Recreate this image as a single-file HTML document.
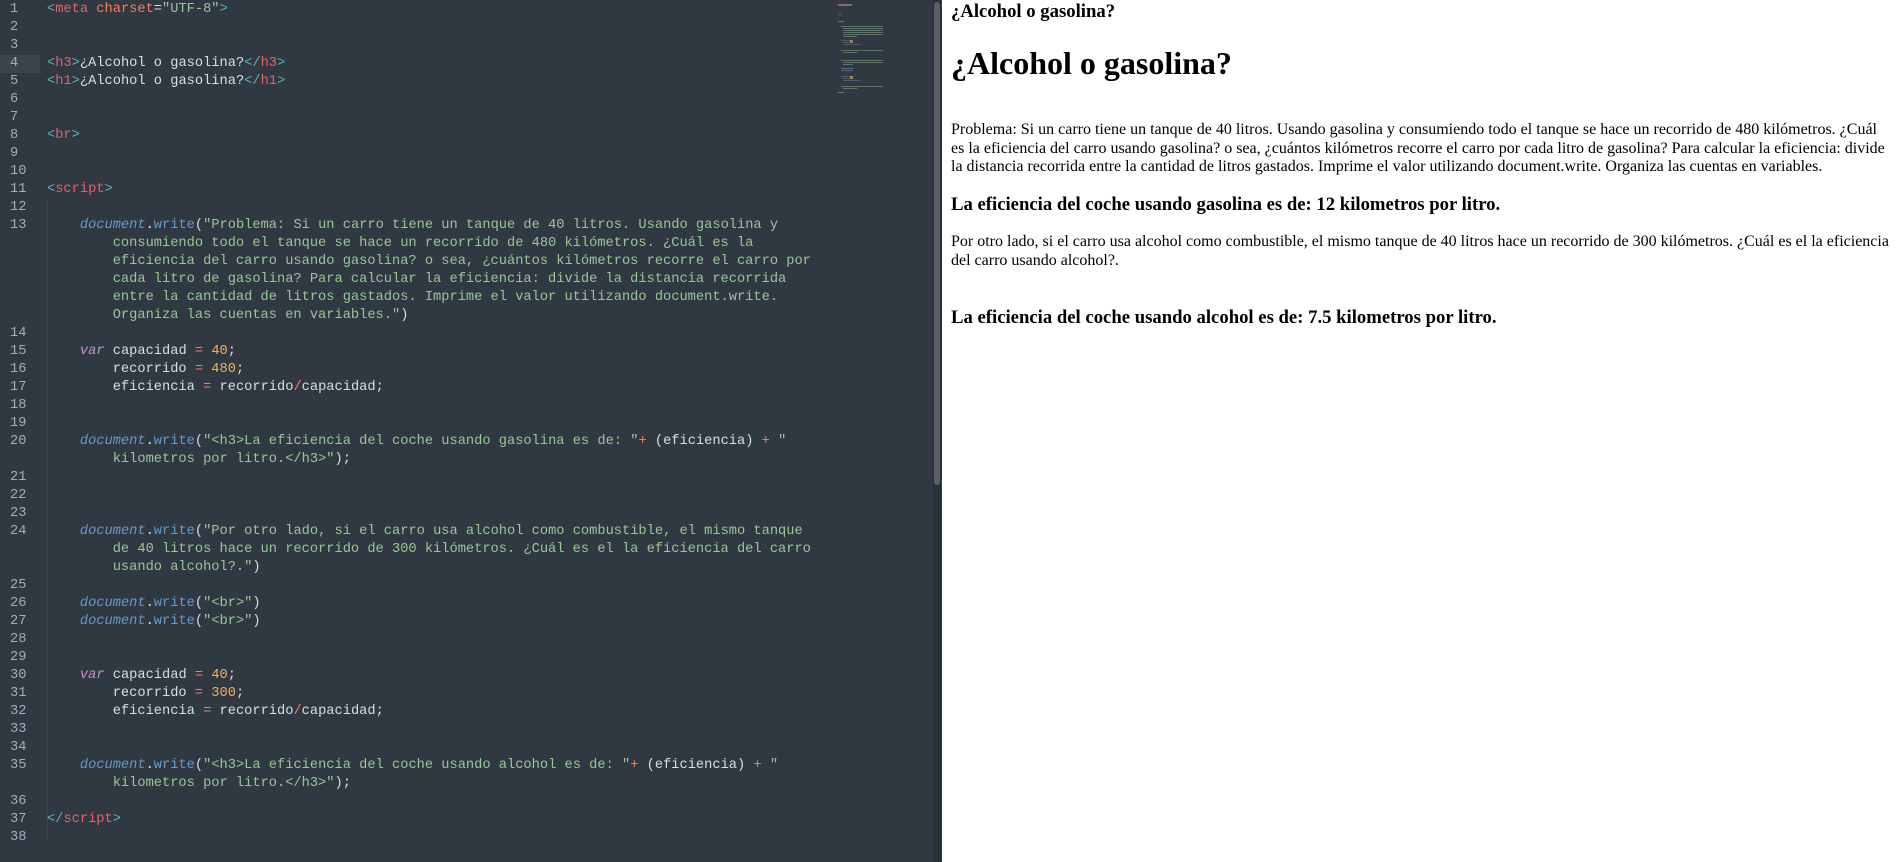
<!DOCTYPE html>
<html><head><meta charset="UTF-8"><style>
html,body{margin:0;padding:0;width:1898px;height:862px;overflow:hidden;background:#303841}
#ed{position:absolute;left:0;top:0;width:933px;height:862px;background:#303841;font-family:"Liberation Mono",monospace;font-size:13.7px;color:#d8dee9}
#rows{position:absolute;left:0;top:2px;width:933px;height:860px}
.r{position:absolute;left:0;height:18px;line-height:18px;white-space:pre;width:933px}
.n{position:absolute;left:0;width:40px;text-align:left;padding-left:10px;box-sizing:border-box;color:#a6acb9}
.c{position:absolute;left:47px}
.hl{background:#3b434c}
.t{color:#5fb3b3}.tn{color:#ec5f66}.s{color:#99c794}.k{color:#c594c5;font-style:italic}.d{color:#6699cc;font-style:italic}.f{color:#6699cc}.o{color:#f97b58}.nu{color:#f9ae58}
#sb{position:absolute;left:933px;top:0;width:8px;height:862px;background:#2a3038}
#th{position:absolute;left:934px;top:2px;width:6px;height:483px;background:#5b6067;border-radius:3px}
#mm{position:absolute;left:838px;top:4px;width:90px;height:90px}
#pv{position:absolute;left:942px;top:0;width:956px;height:862px;background:#fff;font-family:"Liberation Serif",serif;color:#000}
#pv div{position:absolute;left:9px;width:940px}
.h3{font-weight:bold;font-size:18.7px;line-height:22px}
.h1{font-weight:bold;font-size:32px;line-height:37px}
.p{font-size:16px;line-height:18.5px}
.guide{position:absolute;left:47px;width:0;border-left:1px dotted #4a525c}
</style></head><body>
<div id="ed">
<div id="rows">
<div class="guide" style="top:199px;height:640px"></div>
<div class="r" style="top:-1px"><span class="n">1</span><span class="c"><span class="t">&lt;</span><span class="tn">meta</span> <span class="o">charset</span>=<span class="s">"UTF-8"</span><span class="t">&gt;</span></span></div>
<div class="r" style="top:17px"><span class="n">2</span></div>
<div class="r" style="top:35px"><span class="n">3</span></div>
<div class="r" style="top:53px"><span class="n hl">4</span><span class="c"><span class="t">&lt;</span><span class="tn">h3</span><span class="t">&gt;</span>¿Alcohol o gasolina?<span class="t">&lt;/</span><span class="tn">h3</span><span class="t">&gt;</span></span></div>
<div class="r" style="top:71px"><span class="n">5</span><span class="c"><span class="t">&lt;</span><span class="tn">h1</span><span class="t">&gt;</span>¿Alcohol o gasolina?<span class="t">&lt;/</span><span class="tn">h1</span><span class="t">&gt;</span></span></div>
<div class="r" style="top:89px"><span class="n">6</span></div>
<div class="r" style="top:107px"><span class="n">7</span></div>
<div class="r" style="top:125px"><span class="n">8</span><span class="c"><span class="t">&lt;</span><span class="tn">br</span><span class="t">&gt;</span></span></div>
<div class="r" style="top:143px"><span class="n">9</span></div>
<div class="r" style="top:161px"><span class="n">10</span></div>
<div class="r" style="top:179px"><span class="n">11</span><span class="c"><span class="t">&lt;</span><span class="tn">script</span><span class="t">&gt;</span></span></div>
<div class="r" style="top:197px"><span class="n">12</span></div>
<div class="r" style="top:215px"><span class="n">13</span><span class="c">    <span class="d">document</span>.<span class="f">write</span>(<span class="s">"Problema: Si un carro tiene un tanque de 40 litros. Usando gasolina y</span></span></div>
<div class="r" style="top:233px"><span class="c s">        consumiendo todo el tanque se hace un recorrido de 480 kilómetros. ¿Cuál es la</span></div>
<div class="r" style="top:251px"><span class="c s">        eficiencia del carro usando gasolina? o sea, ¿cuántos kilómetros recorre el carro por</span></div>
<div class="r" style="top:269px"><span class="c s">        cada litro de gasolina? Para calcular la eficiencia: divide la distancia recorrida</span></div>
<div class="r" style="top:287px"><span class="c s">        entre la cantidad de litros gastados. Imprime el valor utilizando document.write.</span></div>
<div class="r" style="top:305px"><span class="c"><span class="s">        Organiza las cuentas en variables."</span>)</span></div>
<div class="r" style="top:323px"><span class="n">14</span></div>
<div class="r" style="top:341px"><span class="n">15</span><span class="c">    <span class="k">var</span> capacidad <span class="o">=</span> <span class="nu">40</span>;</span></div>
<div class="r" style="top:359px"><span class="n">16</span><span class="c">        recorrido <span class="o">=</span> <span class="nu">480</span>;</span></div>
<div class="r" style="top:377px"><span class="n">17</span><span class="c">        eficiencia <span class="o">=</span> recorrido<span class="o">/</span>capacidad;</span></div>
<div class="r" style="top:395px"><span class="n">18</span></div>
<div class="r" style="top:413px"><span class="n">19</span></div>
<div class="r" style="top:431px"><span class="n">20</span><span class="c">    <span class="d">document</span>.<span class="f">write</span>(<span class="s">"&lt;h3&gt;La eficiencia del coche usando gasolina es de: "</span><span class="o">+</span> (eficiencia) <span class="o">+</span> <span class="s">"</span></span></div>
<div class="r" style="top:449px"><span class="c"><span class="s">        kilometros por litro.&lt;/h3&gt;"</span>);</span></div>
<div class="r" style="top:467px"><span class="n">21</span></div>
<div class="r" style="top:485px"><span class="n">22</span></div>
<div class="r" style="top:503px"><span class="n">23</span></div>
<div class="r" style="top:521px"><span class="n">24</span><span class="c">    <span class="d">document</span>.<span class="f">write</span>(<span class="s">"Por otro lado, si el carro usa alcohol como combustible, el mismo tanque</span></span></div>
<div class="r" style="top:539px"><span class="c s">        de 40 litros hace un recorrido de 300 kilómetros. ¿Cuál es el la eficiencia del carro</span></div>
<div class="r" style="top:557px"><span class="c"><span class="s">        usando alcohol?."</span>)</span></div>
<div class="r" style="top:575px"><span class="n">25</span></div>
<div class="r" style="top:593px"><span class="n">26</span><span class="c">    <span class="d">document</span>.<span class="f">write</span>(<span class="s">"&lt;br&gt;"</span>)</span></div>
<div class="r" style="top:611px"><span class="n">27</span><span class="c">    <span class="d">document</span>.<span class="f">write</span>(<span class="s">"&lt;br&gt;"</span>)</span></div>
<div class="r" style="top:629px"><span class="n">28</span></div>
<div class="r" style="top:647px"><span class="n">29</span></div>
<div class="r" style="top:665px"><span class="n">30</span><span class="c">    <span class="k">var</span> capacidad <span class="o">=</span> <span class="nu">40</span>;</span></div>
<div class="r" style="top:683px"><span class="n">31</span><span class="c">        recorrido <span class="o">=</span> <span class="nu">300</span>;</span></div>
<div class="r" style="top:701px"><span class="n">32</span><span class="c">        eficiencia <span class="o">=</span> recorrido<span class="o">/</span>capacidad;</span></div>
<div class="r" style="top:719px"><span class="n">33</span></div>
<div class="r" style="top:737px"><span class="n">34</span></div>
<div class="r" style="top:755px"><span class="n">35</span><span class="c">    <span class="d">document</span>.<span class="f">write</span>(<span class="s">"&lt;h3&gt;La eficiencia del coche usando alcohol es de: "</span><span class="o">+</span> (eficiencia) <span class="o">+</span> <span class="s">"</span></span></div>
<div class="r" style="top:773px"><span class="c"><span class="s">        kilometros por litro.&lt;/h3&gt;"</span>);</span></div>
<div class="r" style="top:791px"><span class="n">36</span></div>
<div class="r" style="top:809px"><span class="n">37</span><span class="c"><span class="t">&lt;/</span><span class="tn">script</span><span class="t">&gt;</span></span></div>
<div class="r" style="top:827px"><span class="n">38</span></div>
</div>
<svg id="mm" viewBox="0 0 90 90">
<g fill="#4f5c68">
<rect x="0" y="0" width="14" height="2" fill="#8a6a6a"/>
<rect x="0" y="10" width="4" height="1"/>
<rect x="0" y="17" width="6" height="1" fill="#8a6a6a"/>
<rect x="3" y="22" width="42" height="1" fill="#5f7366"/><rect x="5" y="24" width="40" height="1" fill="#5f7366"/><rect x="5" y="26" width="40" height="1" fill="#5f7366"/><rect x="5" y="28" width="40" height="1" fill="#5f7366"/><rect x="5" y="30" width="40" height="1" fill="#5f7366"/><rect x="5" y="32" width="14" height="1" fill="#5f7366"/>
<rect x="3" y="36" width="10" height="1"/><rect x="5" y="38" width="8" height="1"/><rect x="5" y="40" width="18" height="1"/><rect x="12" y="36" width="3" height="3" fill="#9a8060"/>
<rect x="3" y="46" width="42" height="1" fill="#5f7366"/><rect x="5" y="48" width="14" height="1" fill="#5f7366"/>
<rect x="3" y="56" width="42" height="1" fill="#5f7366"/><rect x="5" y="58" width="40" height="1" fill="#5f7366"/><rect x="5" y="60" width="10" height="1" fill="#5f7366"/>
<rect x="3" y="64" width="12" height="1" fill="#5a6a80"/><rect x="3" y="66" width="12" height="1" fill="#5a6a80"/>
<rect x="3" y="72" width="10" height="1"/><rect x="5" y="74" width="8" height="1"/><rect x="5" y="76" width="18" height="1"/><rect x="12" y="72" width="3" height="3" fill="#9a8060"/>
<rect x="3" y="82" width="42" height="1" fill="#5f7366"/><rect x="5" y="84" width="14" height="1" fill="#5f7366"/>
<rect x="0" y="88" width="6" height="1" fill="#8a6a6a"/>
</g></svg>
</div>
<div id="sb"></div><div id="th"></div>
<div id="pv">
<div class="h3" style="top:1px">¿Alcohol o gasolina?</div>
<div class="h1" style="top:45px">¿Alcohol o gasolina?</div>
<div class="p" style="top:121px">Problema: Si un carro tiene un tanque de 40 litros. Usando gasolina y consumiendo todo el tanque se hace un recorrido de 480 kilómetros. ¿Cuál es la eficiencia del carro usando gasolina? o sea, ¿cuántos kilómetros recorre el carro por cada litro de gasolina? Para calcular la eficiencia: divide la distancia recorrida entre la cantidad de litros gastados. Imprime el valor utilizando document.write. Organiza las cuentas en variables.</div>
<div class="h3" style="top:194px">La eficiencia del coche usando gasolina es de: 12 kilometros por litro.</div>
<div class="p" style="top:233px">Por otro lado, si el carro usa alcohol como combustible, el mismo tanque de 40 litros hace un recorrido de 300 kilómetros. ¿Cuál es el la eficiencia del carro usando alcohol?.</div>
<div class="h3" style="top:307px">La eficiencia del coche usando alcohol es de: 7.5 kilometros por litro.</div>
</div>
</body></html>
